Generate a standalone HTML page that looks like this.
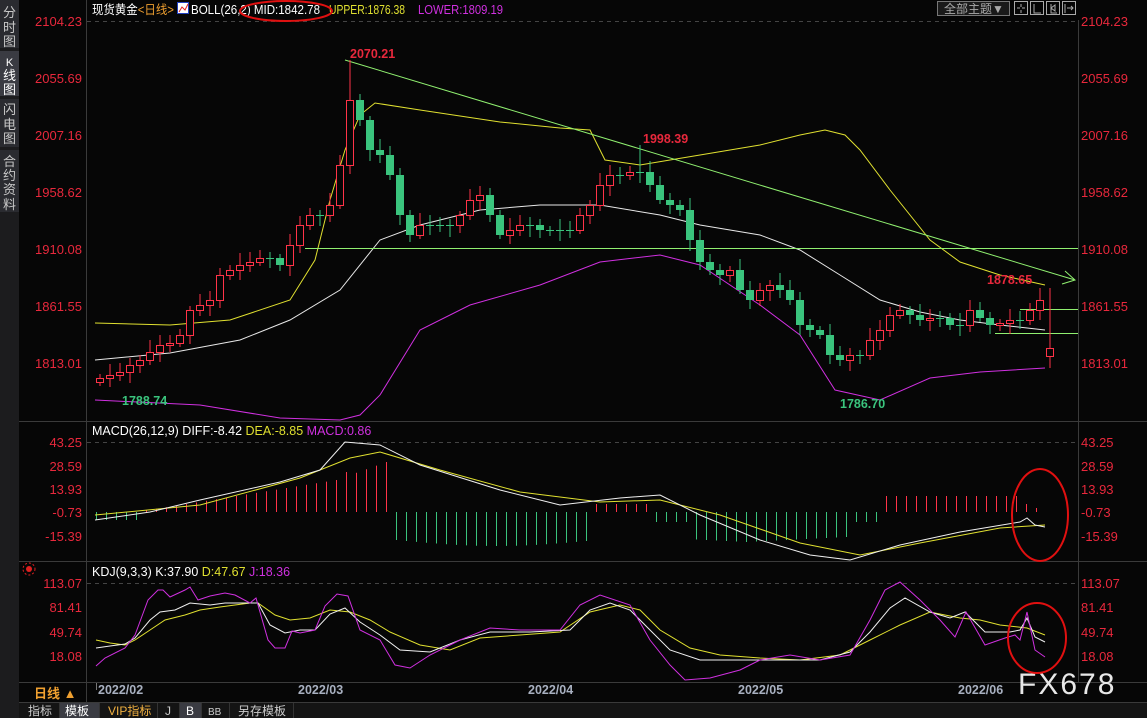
<!DOCTYPE html>
<html><head><meta charset="utf-8"><style>
html,body{margin:0;padding:0;background:#050505;width:1147px;height:718px;overflow:hidden;font-family:"Liberation Sans","Noto Sans CJK SC",sans-serif}
svg{position:absolute;left:0;top:0}
</style></head><body>
<svg id="s" width="1147" height="718" xmlns="http://www.w3.org/2000/svg" font-family="Liberation Sans, Noto Sans CJK SC, sans-serif">
<rect width="1147" height="718" fill="#060606"/>
<rect x="0" y="0" width="19" height="718" fill="#1c1c1e"/>
<rect x="0" y="0" width="19" height="48" fill="#2a2b30"/>
<rect x="0" y="51" width="19" height="45" fill="#3a3b42"/>
<rect x="0" y="99" width="19" height="48" fill="#2a2b30"/>
<rect x="0" y="150" width="19" height="62" fill="#2a2b30"/>
<g fill="#c8c8c8" font-size="13" text-anchor="middle">
<text x="9.5" y="17">分</text><text x="9.5" y="32">时</text><text x="9.5" y="46">图</text>
<text x="9.5" y="66" fill="#fff" font-size="11">K</text><text x="9.5" y="80" fill="#fff">线</text><text x="9.5" y="94" fill="#fff">图</text>
<text x="9.5" y="114">闪</text><text x="9.5" y="129">电</text><text x="9.5" y="143">图</text>
<text x="9.5" y="166">合</text><text x="9.5" y="180">约</text><text x="9.5" y="194">资</text><text x="9.5" y="209">料</text>
</g>
<g stroke="#3a3a3a" stroke-width="1">
<line x1="86.5" y1="0" x2="86.5" y2="703"/>
<line x1="1078.5" y1="20" x2="1078.5" y2="682"/>
<line x1="19" y1="421.5" x2="1147" y2="421.5"/>
<line x1="19" y1="561.5" x2="1147" y2="561.5"/>
<line x1="19" y1="682.5" x2="1147" y2="682.5"/>
<line x1="19" y1="702.5" x2="1147" y2="702.5"/>
</g>
<g stroke="#444" stroke-dasharray="4,4"><line x1="87" y1="21.5" x2="1078" y2="21.5"/><line x1="87" y1="442.5" x2="1078" y2="442.5"/><line x1="87" y1="583.5" x2="1078" y2="583.5"/></g>
<text x="92" y="14" font-size="12.5" fill="#fff" textLength="82" lengthAdjust="spacingAndGlyphs">现货黄金<tspan fill="#f0a030">&lt;日线&gt;</tspan></text>
<rect x="177.5" y="2.5" width="11" height="11" fill="#fff" stroke="#2040c0"/><polyline points="179,12 182,7 185,10 188,4" stroke="#e02020" fill="none"/>
<text x="191" y="14" font-size="12.5" fill="#fff" textLength="129" lengthAdjust="spacingAndGlyphs">BOLL(26,2) MID:1842.78</text>
<text x="329" y="14" font-size="12.5" fill="#e0e030" textLength="76" lengthAdjust="spacingAndGlyphs">UPPER:1876.38</text>
<text x="418" y="14" font-size="12.5" fill="#d030e0" textLength="85" lengthAdjust="spacingAndGlyphs">LOWER:1809.19</text>
<ellipse cx="286" cy="11" rx="46" ry="10" fill="none" stroke="#e01010" stroke-width="2"/>
<rect x="937.5" y="1.5" width="72" height="14" fill="#1a1a1a" stroke="#777"/>
<text x="944" y="13" font-size="12" fill="#aaa">全部主题▼</text>
<g fill="none" stroke="#aaa"><rect x="1014.5" y="1.5" width="13" height="13"/><rect x="1030.5" y="1.5" width="13" height="13"/><rect x="1046.5" y="1.5" width="13" height="13"/><rect x="1062.5" y="1.5" width="13" height="13"/>
<path d="M1021 4v3M1021 10v3M1017 8h3M1022 8h3M1034 4v9h7M1051 4v9h6M1051 8l4-3v6zM1065 4v9M1067 8h6M1071 6l2 2-2 2"/></g>
<g id="g"></g>
<g font-size="13" fill="#e8283c" text-anchor="end">
<text x="82" y="26">2104.23</text><text x="82" y="83">2055.69</text><text x="82" y="140">2007.16</text><text x="82" y="197">1958.62</text><text x="82" y="254">1910.08</text><text x="82" y="311">1861.55</text><text x="82" y="368">1813.01</text>
<text x="82" y="447">43.25</text><text x="82" y="471">28.59</text><text x="82" y="494">13.93</text><text x="82" y="517">-0.73</text><text x="82" y="541">-15.39</text>
<text x="82" y="588">113.07</text><text x="82" y="612">81.41</text><text x="82" y="637">49.74</text><text x="82" y="661">18.08</text>
</g>
<g font-size="13" fill="#e8283c">
<text x="1081" y="26">2104.23</text><text x="1081" y="83">2055.69</text><text x="1081" y="140">2007.16</text><text x="1081" y="197">1958.62</text><text x="1081" y="254">1910.08</text><text x="1081" y="311">1861.55</text><text x="1081" y="368">1813.01</text>
<text x="1081" y="447">43.25</text><text x="1081" y="471">28.59</text><text x="1081" y="494">13.93</text><text x="1081" y="517">-0.73</text><text x="1081" y="541">-15.39</text>
<text x="1081" y="588">113.07</text><text x="1081" y="612">81.41</text><text x="1081" y="637">49.74</text><text x="1081" y="661">18.08</text>
</g>
<text x="92" y="435" font-size="12.5" fill="#fff">MACD(26,12,9) DIFF:-8.42 <tspan fill="#e0e030">DEA:-8.85</tspan> <tspan fill="#d030e0">MACD:0.86</tspan></text>
<text x="92" y="576" font-size="12.5" fill="#fff">KDJ(9,3,3) K:37.90 <tspan fill="#e0e030">D:47.67</tspan> <tspan fill="#d030e0">J:18.36</tspan></text>
<circle cx="29" cy="569" r="3" fill="#e02020"/><circle cx="29" cy="569" r="6" fill="none" stroke="#e02020" stroke-dasharray="2,2"/>
<g font-size="12.5" font-weight="bold">
<text x="350" y="58" fill="#e8283c">2070.21</text><text x="643" y="143" fill="#e8283c">1998.39</text><text x="987" y="284" fill="#e8283c">1878.65</text>
<text x="122" y="405" fill="#3ac47d">1788.74</text><text x="840" y="408" fill="#3ac47d">1786.70</text>
</g>
<g font-size="12.5" font-weight="bold" fill="#a8b0c0">
<text x="98" y="694">2022/02</text><text x="298" y="694">2022/03</text><text x="528" y="694">2022/04</text><text x="738" y="694">2022/05</text><text x="958" y="694">2022/06</text>
</g>
<line x1="96.5" y1="683" x2="96.5" y2="690" stroke="#777"/>
<text x="34" y="698" font-size="13" font-weight="bold" fill="#f0a030">日线 ▲</text>
<rect x="19" y="703" width="1128" height="15" fill="#141414"/>
<rect x="60" y="703" width="39" height="15" fill="#3a3b42"/>
<rect x="180" y="703" width="21" height="15" fill="#3a3b42"/>
<g font-size="12" fill="#ccc"><text x="28" y="715">指标</text><text x="65" y="715" fill="#fff">模板</text><text x="108" y="715" fill="#f0b040">VIP指标</text><text x="165" y="715">J</text><text x="186" y="715" fill="#fff">B</text><text x="208" y="715" font-size="10">BB</text><text x="238" y="715">另存模板</text></g>
<g stroke="#333"><line x1="59.5" y1="703" x2="59.5" y2="718"/><line x1="99.5" y1="703" x2="99.5" y2="718"/><line x1="157.5" y1="703" x2="157.5" y2="718"/><line x1="179.5" y1="703" x2="179.5" y2="718"/><line x1="201.5" y1="703" x2="201.5" y2="718"/><line x1="229.5" y1="703" x2="229.5" y2="718"/><line x1="293.5" y1="703" x2="293.5" y2="718"/></g>
<text x="1018" y="694" font-size="30" fill="#e8e8e8" letter-spacing="2">FX678</text>
<ellipse cx="1040" cy="515" rx="28" ry="46" fill="none" stroke="#e01010" stroke-width="2"/>
<ellipse cx="1037" cy="638" rx="29" ry="35" fill="none" stroke="#e01010" stroke-width="2"/>
</svg>
<script>
var g=document.getElementById('g'),h='';
function pl(p,c){h+='<polyline fill="none" stroke="'+c+'" stroke-width="1" points="'+p.map(function(a){return a.join(',')}).join(' ')+'"/>';}
pl([[95,323],[170,325],[230,320],[290,300],[315,260],[330,200],[345,150],[360,115],[375,103],[420,110],[500,122],[560,128],[590,130],[605,160],[640,165],[700,155],[760,145],[800,135],[825,130],[845,135],[860,150],[890,190],[930,240],[960,262],[1000,275],[1045,285]],'#e0e030');
pl([[95,360],[170,353],[240,340],[290,320],[340,290],[380,240],[420,225],[480,210],[540,205],[600,205],[660,215],[700,225],[760,235],[800,250],[840,275],[880,300],[920,312],[960,320],[1000,325],[1045,330]],'#e8e8e8');
pl([[95,400],[200,405],[280,418],[340,420],[360,415],[380,395],[420,330],[470,305],[540,285],[600,262],[660,255],[700,265],[760,305],[800,335],[835,390],[880,400],[930,378],[980,372],[1045,368]],'#d030e0');
h+='<line x1="345" y1="60" x2="1075" y2="280" stroke="#90f070"/><polyline points="1065,271 1075,280 1062,284" fill="none" stroke="#90f070"/>';
h+='<line x1="305" y1="248.5" x2="1078" y2="248.5" stroke="#90f070"/>';
h+='<line x1="1020" y1="309.5" x2="1078" y2="309.5" stroke="#90f070"/><line x1="995" y1="333.5" x2="1078" y2="333.5" stroke="#90f070"/>';
var c=[378,375,372,365,360,352,345,343,335,310,305,300,275,270,265,262,258,258,265,245,225,215,215,205,165,100,120,150,155,175,215,235,225,225,225,225,215,200,195,215,235,230,225,225,230,230,230,230,215,205,185,175,175,172,172,185,200,205,210,240,262,270,275,270,290,300,290,285,290,300,325,330,335,355,360,355,355,340,330,315,310,315,320,318,318,325,325,310,318,325,323,320,320,310,300,352];
var prev=382;
for(var i=0;i<c.length;i++){var x=96+i*10,y=c[i],o=prev;var up=y<o;var t=Math.min(o,y),b=Math.max(o,y);if(b-t<1)b=t+1;var hi=t-4-(i*7%9),lo=b+4+(i*5%8);
if(i==25)hi=60;if(i==54)hi=145;if(i==94)hi=288;if(i==95){t=348;b=356;up=true;lo=368}
var col=up?'#ff3348':'#3ac47d';
h+='<line x1="'+(x+4)+'" y1="'+hi+'" x2="'+(x+4)+'" y2="'+lo+'" stroke="'+col+'"/>';
if(up)h+='<rect x="'+(x+0.5)+'" y="'+(t+0.5)+'" width="7" height="'+(b-t)+'" fill="#060606" stroke="'+col+'"/>';
else h+='<rect x="'+x+'" y="'+t+'" width="8" height="'+(b-t)+'" fill="'+col+'"/>';
prev=y;}
for(var i=0;i<95;i++){var x=96.5+i*10,v;
if(i<5)v=-8; else if(i<30)v=(i-4)*1.6+(i>24?(i-24)*2:0); else if(i<50)v=-28-Math.sin((i-30)/20*3.14)*6; else if(i<56)v=8; else if(i<79)v=-30+Math.abs(i-65)*0.5; else if(i<93)v=16; else v=(95-i)*4;
if(i==25)v=40;if(i>=56&&i<60)v=-10;if(i>=76&&i<79)v=-10;
var col=v>0?'#ff3348':'#3ac47d';h+='<line x1="'+x+'" y1="512" x2="'+x+'" y2="'+(512-v)+'" stroke="'+col+'"/>';}
pl([[95,515],[200,505],[300,478],[350,458],[380,452],[440,470],[520,492],[600,502],[660,500],[720,515],[800,543],[860,555],[920,543],[1000,528],[1045,525]],'#e0e030');
pl([[95,520],[150,512],[200,500],[280,482],[320,470],[345,442],[380,445],[420,465],[500,490],[560,505],[620,498],[660,495],[700,515],[760,540],[810,555],[850,560],[900,545],[960,532],[1020,522],[1027,518],[1035,525],[1045,527]],'#f0f0f0');
pl([[96,640],[110,643],[125,645],[135,640],[150,630],[165,620],[185,615],[200,610],[220,607],[250,603],[258,603],[275,615],[290,620],[310,618],[330,610],[350,612],[370,620],[390,632],[420,645],[450,650],[480,638],[520,635],[560,632],[590,612],[620,605],[640,610],[660,630],[690,648],[720,655],[760,658],[800,660],[840,655],[870,640],[900,625],[930,612],[960,618],[980,620],[1000,625],[1027,628],[1045,635]],'#e0e030');
pl([[96,648],[110,646],[125,644],[135,638],[150,620],[160,612],[175,610],[190,603],[210,605],[225,603],[250,603],[258,603],[270,625],[285,633],[300,630],[315,630],[330,614],[345,608],[360,622],[380,635],[400,650],[430,652],[460,640],[490,632],[530,632],[570,630],[590,610],[610,603],[630,610],[650,630],[670,650],[700,660],[740,660],[780,660],[820,660],[850,652],[870,632],[890,608],[905,598],[930,612],[950,618],[965,612],[985,632],[1010,632],[1020,630],[1027,618],[1035,637],[1045,642]],'#f0f0f0');
pl([[96,666],[105,658],[125,648],[135,635],[148,600],[158,590],[163,590],[170,597],[185,590],[190,587],[198,600],[210,596],[225,593],[235,595],[250,603],[256,598],[268,640],[275,648],[285,648],[292,631],[300,633],[315,630],[325,606],[337,594],[348,596],[360,630],[380,640],[395,665],[410,668],[430,655],[460,640],[490,628],[520,630],[560,630],[580,605],[600,595],[630,605],[650,640],[670,665],[685,680],[710,678],[740,670],[760,660],[790,655],[820,660],[850,655],[870,620],[885,590],[900,582],[920,600],[940,620],[955,637],[966,612],[985,645],[1005,638],[1015,635],[1020,640],[1027,612],[1035,650],[1045,657]],'#d030e0');
g.innerHTML=h;
</script>
</body></html>
